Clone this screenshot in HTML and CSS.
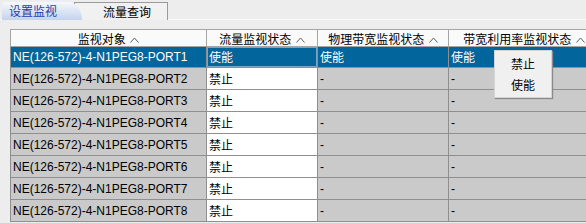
FILE: index.html
```html
<!DOCTYPE html>
<html lang="zh-CN">

<head>
  <meta charset="UTF-8" />
  <title>设置监视</title>
  <link rel="stylesheet" href="styles.css">
</head>

<body>
  <div class="tabs">
    <div class="tab tab-active">设置监视</div>
    <div class="tab">流量查询</div>
  </div>

  <div class="panel">
    <table class="grid">
      <colgroup>
        <col class="c1">
        <col class="c2">
        <col class="c3">
        <col class="c4">
      </colgroup>
      <thead>
        <tr>
          <th>监视对象 <svg class="caret" width="9" height="6" viewBox="0 0 9 6"><path d="M0.5 5.5 L4.5 1 L8.5 5.5" /></svg></th>
          <th>流量监视状态 <svg class="caret" width="9" height="6" viewBox="0 0 9 6"><path d="M0.5 5.5 L4.5 1 L8.5 5.5" /></svg></th>
          <th>物理带宽监视状态 <svg class="caret" width="9" height="6" viewBox="0 0 9 6"><path d="M0.5 5.5 L4.5 1 L8.5 5.5" /></svg></th>
          <th>带宽利用率监视状态 <svg class="caret" width="9" height="6" viewBox="0 0 9 6"><path d="M0.5 5.5 L4.5 1 L8.5 5.5" /></svg></th>
        </tr>
      </thead>
      <tbody id="rows">
        <tr class="selected">
          <td>NE(126-572)-4-N1PEG8-PORT1</td>
          <td class="edit focus">使能</td>
          <td>使能</td>
          <td>使能</td>
        </tr>
      </tbody>
    </table>

    <ul class="menu">
      <li class="menu-item">禁止</li>
      <li class="menu-item">使能</li>
    </ul>
  </div>

  <script>
    const $rows = document.getElementById('rows');
    const $fragment = document.createDocumentFragment();

    for (let i = 2; i <= 8; i++) {
      const $tr = document.createElement('tr');
      $tr.innerHTML =
        '<td>NE(126-572)-4-N1PEG8-PORT' + i + '</td>' +
        '<td class="edit">禁止</td>' +
        '<td>-</td>' +
        '<td>-</td>';
      $fragment.appendChild($tr);
    }
    $rows.appendChild($fragment);
  </script>
</body>

</html>
```

FILE: styles.css
```css
* {
  box-sizing: border-box;
}

body {
  margin: 0;
  height: 223px;
  overflow: hidden;
  background-color: #ededed;
  font-family: "Liberation Sans", "Noto Sans CJK SC", sans-serif;
  font-size: 12px;
  color: #000;
}

.tabs {
  display: flex;
  height: 20px;
  padding: 2px 0 0 2px;
  border-bottom: 1px solid #fafafa;
}

.tab {
  width: 94px;
  height: 18px;
  line-height: 17px;
  padding-left: 28px;
  margin-left: -8px;
  border: 1px solid #9a9a9a;
  border-bottom: none;
  background-color: #f1f1f1;
  font-family: "Noto Sans CJK SC", sans-serif;
}

.tab-active {
  position: relative;
  z-index: 1;
  width: 80px;
  margin-left: 0;
  padding-left: 7px;
  border: none;
  border-top-left-radius: 4px;
  border-top-right-radius: 14px 18px;
  background: linear-gradient(#f6f8fc, #c3d3ee);
  color: #1e3fa6;
}

.panel {
  position: relative;
  padding: 9px 0 0 10px;
}

.grid {
  width: 590px;
  table-layout: fixed;
  border-collapse: collapse;
  font-size: 12px;
}

.c1 {
  width: 196px;
}

.c2 {
  width: 111px;
}

.c3 {
  width: 131px;
}

th {
  height: 17px;
  padding: 0;
  border: 1px solid #a5a5a5;
  background-color: #fafafa;
  font-weight: normal;
  font-family: "Noto Sans CJK SC", sans-serif;
  line-height: 15px;
  text-align: center;
  white-space: nowrap;
}

.caret {
  margin-left: 2px;
  vertical-align: 1px;
}

.caret path {
  fill: none;
  stroke: #606060;
  stroke-width: 1;
}

td {
  height: 22px;
  padding: 0 2px;
  border: 1px solid #8f8f8f;
  background-color: #cacaca;
  line-height: 20px;
  white-space: nowrap;
  overflow: hidden;
}

td.edit {
  background-color: #fff;
  font-family: "Noto Sans CJK SC", sans-serif;
}

.selected td {
  height: 21px;
  background-color: #02659b;
  color: #fff;
  font-family: "Noto Sans CJK SC", sans-serif;
}

.selected td:first-child {
  font-family: "Liberation Sans", sans-serif;
}

.selected td.focus {
  background-color: #02659b;
  box-shadow: inset 0 0 0 1px #7fa3c4;
}

.menu {
  position: absolute;
  left: 494px;
  top: 30px;
  width: 58px;
  margin: 0;
  padding: 2px 0;
  list-style: none;
  background-color: #f0f0f0;
  border: 1px solid #d4d4d4;
  box-shadow: 1px 1px 1px #8a8a8a;
  font-family: "Noto Sans CJK SC", sans-serif;
}

.menu-item {
  height: 21px;
  line-height: 21px;
  text-align: center;
}
```
